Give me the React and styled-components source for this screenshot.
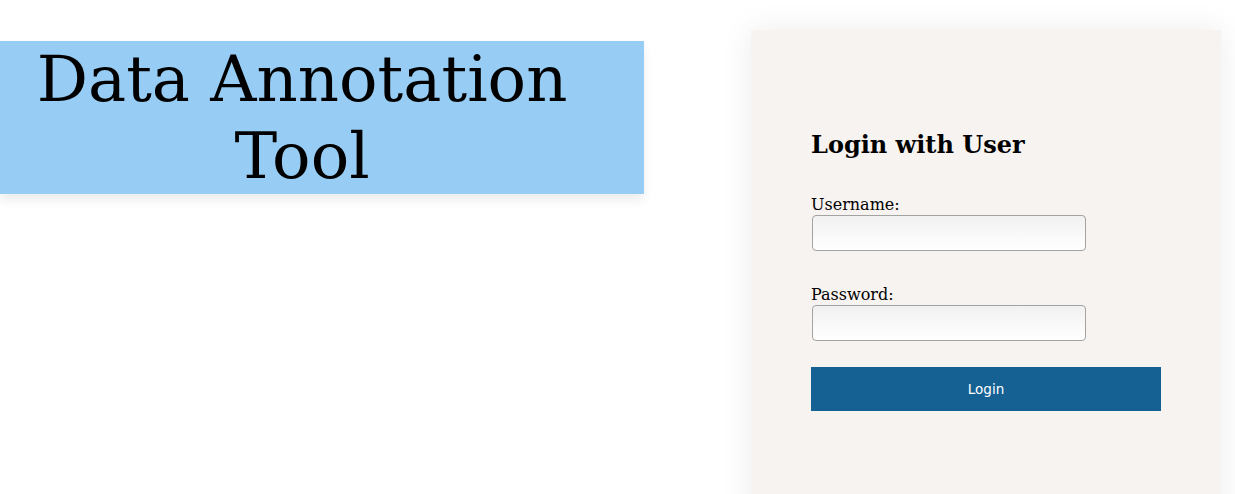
import React, { useState } from "react";
import styled, { createGlobalStyle } from "styled-components";

const GlobalStyle = createGlobalStyle`
  html, body {
    margin: 0;
    padding: 0;
    background: #fff;
    font-family: "DejaVu Serif", serif;
    overflow: hidden;
  }
`;

const Page = styled.div`
  display: flex;
  justify-content: space-between;
  align-items: flex-start;
  padding-right: 14px;
  height: 494px;
  overflow: hidden;
`;

const Banner = styled.div`
  width: 604px;
  padding-right: 40px;
  margin-top: 41px;
  background: #97cdf4;
  box-shadow: 0 6px 10px rgba(0, 0, 0, 0.08);
`;

const Title = styled.h1`
  margin: 0;
  font-family: "DejaVu Serif", serif;
  font-weight: normal;
  font-size: 64px;
  line-height: 76.5px;
  text-align: center;
  color: #000;
`;

const Card = styled.div`
  width: 350px;
  height: 500px;
  margin-top: 30px;
  padding: 80px 60px 0;
  background: #f7f3f0;
  box-shadow: 0 0 30px rgba(0, 0, 0, 0.08);
`;

const Heading = styled.h2`
  margin: 20px 0 36px;
  font-size: 24px;
  font-weight: bold;
  color: #000;
`;

const Form = styled.form`
  display: flex;
  flex-direction: column;
  align-items: flex-start;
`;

const Label = styled.label`
  font-size: 16px;
  line-height: 19px;
  color: #000;
  margin-top: ${({ $gap }) => $gap || 0}px;
`;

const Input = styled.input`
  box-sizing: border-box;
  width: 274px;
  height: 36px;
  margin: 1px 0 0 1px;
  border: 1px solid #a3a3a3;
  border-radius: 4px;
  background: linear-gradient(#f1f1f1, #ffffff);
  font-size: 14px;
  padding: 0 8px;
  outline: none;
`;

const Button = styled.button`
  width: 350px;
  height: 44px;
  margin-top: 26px;
  border: none;
  background: #156194;
  color: #fff;
  font-family: "DejaVu Sans", sans-serif;
  font-size: 13.5px;
  cursor: pointer;
`;

const App = () => {
  const [username, setUsername] = useState("");
  const [password, setPassword] = useState("");

  return (
    <>
      <GlobalStyle />
      <Page>
        <Banner>
          <Title>Data Annotation Tool</Title>
        </Banner>
        <Card>
          <Heading>Login with User</Heading>
          <Form onSubmit={(e) => e.preventDefault()}>
            <Label htmlFor="username">Username:</Label>
            <Input
              id="username"
              value={username}
              onChange={(e) => setUsername(e.target.value)}
            />
            <Label htmlFor="password" $gap={34}>
              Password:
            </Label>
            <Input
              id="password"
              type="password"
              value={password}
              onChange={(e) => setPassword(e.target.value)}
            />
            <Button type="submit">Login</Button>
          </Form>
        </Card>
      </Page>
    </>
  );
};

export default App;
